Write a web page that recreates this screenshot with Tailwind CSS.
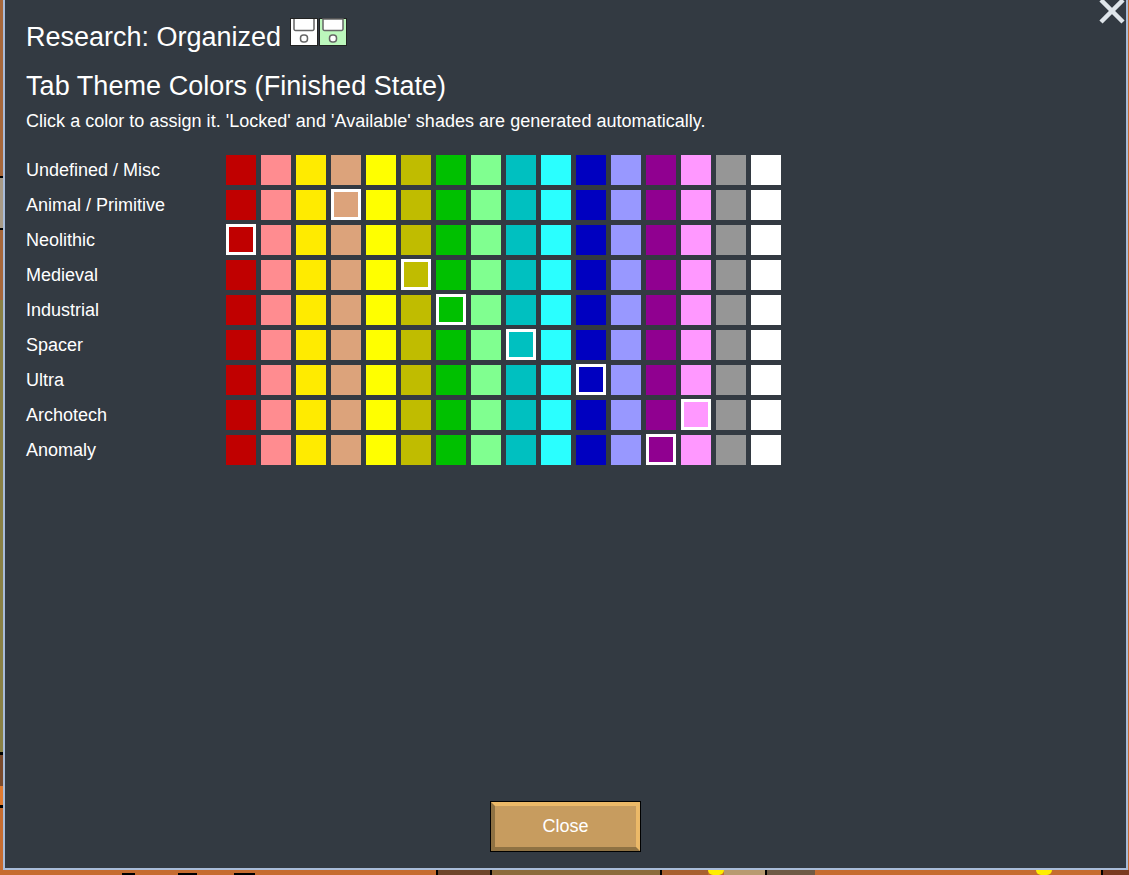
<!DOCTYPE html>
<html><head><meta charset="utf-8"><script src="https://cdn.jsdelivr.net/npm/@tailwindcss/browser@4"></script></head>
<body class="bg-[#c66c30]">
<div class="relative h-[875px] w-[1129px] overflow-hidden bg-[#c66c30] font-['Liberation_Sans',Arial,sans-serif] text-white">
  <!-- world behind the dialog: left edge -->
  <div class="absolute left-0 top-0 flex h-[875px] w-[3px] flex-col">
    <div class="h-[176px] bg-[#a7673a]"></div>
    <div class="h-[2px] bg-black"></div>
    <div class="h-[50px] bg-[#a89a86]"></div>
    <div class="h-[2px] bg-black"></div>
    <div class="h-[70px] bg-[#a7673a]"></div>
    <div class="h-[452px] bg-[#8a8044]"></div>
    <div class="h-[3px] bg-black"></div>
    <div class="h-[31px] bg-[#7a4a2c]"></div>
    <div class="h-[19px] bg-[#e07a30]"></div>
    <div class="h-[3px] bg-black"></div>
    <div class="flex-1 bg-[#c66c30]"></div>
  </div>
  <!-- world behind the dialog: bottom edge -->
  <div class="absolute bottom-0 left-0 flex h-[5px] w-[1129px]">
    <div class="relative w-[436px] bg-[#c66c30]">
      <i class="absolute bottom-0 left-[122px] h-[2px] w-[13px] bg-black"></i>
      <i class="absolute bottom-0 left-[178px] h-[2px] w-[19px] bg-black"></i>
      <i class="absolute bottom-0 left-[234px] h-[2px] w-[21px] bg-black"></i>
    </div>
    <div class="w-[2px] bg-black"></div>
    <div class="w-[52px] bg-[#6f452a]"></div>
    <div class="w-[2px] bg-black"></div>
    <div class="w-[168px] bg-[#8c6b3c]"></div>
    <div class="w-[2px] bg-black"></div>
    <div class="w-[46px] bg-[#a8602f]"></div>
    <div class="w-[16px] rounded-b-full bg-[#ffee00]"></div>
    <div class="w-[41px] bg-[#b89a70]"></div>
    <div class="w-[2px] bg-black"></div>
    <div class="w-[48px] bg-[#6f5a45]"></div>
    <div class="w-[221px] bg-[#c66c30]"></div>
    <div class="w-[16px] rounded-b-full bg-[#ffee00]"></div>
    <div class="w-[49px] bg-[#c66c30]"></div>
    <div class="w-[2px] bg-black"></div>
    <div class="flex-1 bg-[#7a3a20]"></div>
  </div>
  <div class="absolute left-[3px] top-[-3px] flex h-[873px] w-[1125px] flex-col border-2 border-[#a9bcd9] bg-[#333a42] pl-[21px] pt-[20px]">
    <div class="flex h-[36px] items-center gap-[1px]">
      <h1 class="mr-[8px] text-[27px] leading-[36px]">Research: Organized</h1>
      <svg class="mt-[-10px]" width="28" height="28" viewBox="0 0 28 28"><rect x=".5" y=".5" width="27" height="27" fill="#fff" stroke="#222"/><path d="M4 1v10a1.500 1.500 0 0 0 1.500 1.500h17A1.500 1.500 0 0 0 24 11V1" fill="none" stroke="#666" stroke-width="1.500"/><rect x="10.500" y="17" width="7" height="7" rx="3" fill="none" stroke="#666" stroke-width="1.500"/></svg>
      <svg class="mt-[-10px]" width="28" height="28" viewBox="0 0 28 28"><rect x=".5" y=".5" width="27" height="27" fill="#bcf7bc" stroke="#222"/><path d="M4 1v10a1.500 1.500 0 0 0 1.500 1.500h17A1.500 1.500 0 0 0 24 11V1z" fill="#fff" stroke="#666" stroke-width="1.500"/><rect x="10.500" y="17" width="7" height="7" rx="3" fill="#fff" stroke="#666" stroke-width="1.500"/></svg>
    </div>
    <h2 class="mt-[13px] text-[27px] leading-[36px] tracking-[0.06px]">Tab Theme Colors (Finished State)</h2>
    <p class="mt-[7px] text-[18px] leading-[20px] tracking-[0.023px]">Click a color to assign it. 'Locked' and 'Available' shades are generated automatically.</p>
    <div class="mt-[24px] grid grid-cols-[195px_repeat(16,30px)] grid-rows-[repeat(9,30px)] gap-x-[5px] gap-y-[5px] text-[18px] leading-[30px]">
      <div>Undefined / Misc</div>
      <i class="block bg-[#c00000]"></i><i class="block bg-[#ff8c90]"></i><i class="block bg-[#ffeb00]"></i><i class="block bg-[#dca37b]"></i><i class="block bg-[#ffff00]"></i><i class="block bg-[#c0bc00]"></i><i class="block bg-[#00c000]"></i><i class="block bg-[#80ff90]"></i><i class="block bg-[#00c0c0]"></i><i class="block bg-[#2affff]"></i><i class="block bg-[#0000c0]"></i><i class="block bg-[#9898ff]"></i><i class="block bg-[#900090]"></i><i class="block bg-[#ff98ff]"></i><i class="block bg-[#969696]"></i><i class="block bg-white"></i>
      <div>Animal / Primitive</div>
      <i class="block bg-[#c00000]"></i><i class="block bg-[#ff8c90]"></i><i class="block bg-[#ffeb00]"></i><i class="-mt-px block h-[31px] border-3 border-white bg-[#dca37b]"></i><i class="block bg-[#ffff00]"></i><i class="block bg-[#c0bc00]"></i><i class="block bg-[#00c000]"></i><i class="block bg-[#80ff90]"></i><i class="block bg-[#00c0c0]"></i><i class="block bg-[#2affff]"></i><i class="block bg-[#0000c0]"></i><i class="block bg-[#9898ff]"></i><i class="block bg-[#900090]"></i><i class="block bg-[#ff98ff]"></i><i class="block bg-[#969696]"></i><i class="block bg-white"></i>
      <div>Neolithic</div>
      <i class="-mt-px block h-[31px] border-3 border-white bg-[#c00000]"></i><i class="block bg-[#ff8c90]"></i><i class="block bg-[#ffeb00]"></i><i class="block bg-[#dca37b]"></i><i class="block bg-[#ffff00]"></i><i class="block bg-[#c0bc00]"></i><i class="block bg-[#00c000]"></i><i class="block bg-[#80ff90]"></i><i class="block bg-[#00c0c0]"></i><i class="block bg-[#2affff]"></i><i class="block bg-[#0000c0]"></i><i class="block bg-[#9898ff]"></i><i class="block bg-[#900090]"></i><i class="block bg-[#ff98ff]"></i><i class="block bg-[#969696]"></i><i class="block bg-white"></i>
      <div>Medieval</div>
      <i class="block bg-[#c00000]"></i><i class="block bg-[#ff8c90]"></i><i class="block bg-[#ffeb00]"></i><i class="block bg-[#dca37b]"></i><i class="block bg-[#ffff00]"></i><i class="-mt-px block h-[31px] border-3 border-white bg-[#c0bc00]"></i><i class="block bg-[#00c000]"></i><i class="block bg-[#80ff90]"></i><i class="block bg-[#00c0c0]"></i><i class="block bg-[#2affff]"></i><i class="block bg-[#0000c0]"></i><i class="block bg-[#9898ff]"></i><i class="block bg-[#900090]"></i><i class="block bg-[#ff98ff]"></i><i class="block bg-[#969696]"></i><i class="block bg-white"></i>
      <div>Industrial</div>
      <i class="block bg-[#c00000]"></i><i class="block bg-[#ff8c90]"></i><i class="block bg-[#ffeb00]"></i><i class="block bg-[#dca37b]"></i><i class="block bg-[#ffff00]"></i><i class="block bg-[#c0bc00]"></i><i class="-mt-px block h-[31px] border-3 border-white bg-[#00c000]"></i><i class="block bg-[#80ff90]"></i><i class="block bg-[#00c0c0]"></i><i class="block bg-[#2affff]"></i><i class="block bg-[#0000c0]"></i><i class="block bg-[#9898ff]"></i><i class="block bg-[#900090]"></i><i class="block bg-[#ff98ff]"></i><i class="block bg-[#969696]"></i><i class="block bg-white"></i>
      <div>Spacer</div>
      <i class="block bg-[#c00000]"></i><i class="block bg-[#ff8c90]"></i><i class="block bg-[#ffeb00]"></i><i class="block bg-[#dca37b]"></i><i class="block bg-[#ffff00]"></i><i class="block bg-[#c0bc00]"></i><i class="block bg-[#00c000]"></i><i class="block bg-[#80ff90]"></i><i class="-mt-px block h-[31px] border-3 border-white bg-[#00c0c0]"></i><i class="block bg-[#2affff]"></i><i class="block bg-[#0000c0]"></i><i class="block bg-[#9898ff]"></i><i class="block bg-[#900090]"></i><i class="block bg-[#ff98ff]"></i><i class="block bg-[#969696]"></i><i class="block bg-white"></i>
      <div>Ultra</div>
      <i class="block bg-[#c00000]"></i><i class="block bg-[#ff8c90]"></i><i class="block bg-[#ffeb00]"></i><i class="block bg-[#dca37b]"></i><i class="block bg-[#ffff00]"></i><i class="block bg-[#c0bc00]"></i><i class="block bg-[#00c000]"></i><i class="block bg-[#80ff90]"></i><i class="block bg-[#00c0c0]"></i><i class="block bg-[#2affff]"></i><i class="-mt-px block h-[31px] border-3 border-white bg-[#0000c0]"></i><i class="block bg-[#9898ff]"></i><i class="block bg-[#900090]"></i><i class="block bg-[#ff98ff]"></i><i class="block bg-[#969696]"></i><i class="block bg-white"></i>
      <div>Archotech</div>
      <i class="block bg-[#c00000]"></i><i class="block bg-[#ff8c90]"></i><i class="block bg-[#ffeb00]"></i><i class="block bg-[#dca37b]"></i><i class="block bg-[#ffff00]"></i><i class="block bg-[#c0bc00]"></i><i class="block bg-[#00c000]"></i><i class="block bg-[#80ff90]"></i><i class="block bg-[#00c0c0]"></i><i class="block bg-[#2affff]"></i><i class="block bg-[#0000c0]"></i><i class="block bg-[#9898ff]"></i><i class="block bg-[#900090]"></i><i class="-mt-px block h-[31px] border-3 border-white bg-[#ff98ff]"></i><i class="block bg-[#969696]"></i><i class="block bg-white"></i>
      <div>Anomaly</div>
      <i class="block bg-[#c00000]"></i><i class="block bg-[#ff8c90]"></i><i class="block bg-[#ffeb00]"></i><i class="block bg-[#dca37b]"></i><i class="block bg-[#ffff00]"></i><i class="block bg-[#c0bc00]"></i><i class="block bg-[#00c000]"></i><i class="block bg-[#80ff90]"></i><i class="block bg-[#00c0c0]"></i><i class="block bg-[#2affff]"></i><i class="block bg-[#0000c0]"></i><i class="block bg-[#9898ff]"></i><i class="-mt-px block h-[31px] border-3 border-white bg-[#900090]"></i><i class="block bg-[#ff98ff]"></i><i class="block bg-[#969696]"></i><i class="block bg-white"></i>
    </div>
    <button class="absolute left-[486px] top-[803px] h-[49px] w-[149px] border-4 border-t-[#ecb968] border-r-[#ecb968] border-b-[#8f7243] border-l-[#8f7243] bg-[#c79c5f] text-[18px] text-white ring-1 ring-black">Close</button>
    <svg class="absolute right-[1px] top-[1px]" width="26" height="24" viewBox="0 0 26 24"><path d="M2 0 L24 22 M24 0 L2 22" stroke="#dfe5ea" stroke-width="4.500" fill="none"/></svg>
  </div>
</div>
</body></html>
